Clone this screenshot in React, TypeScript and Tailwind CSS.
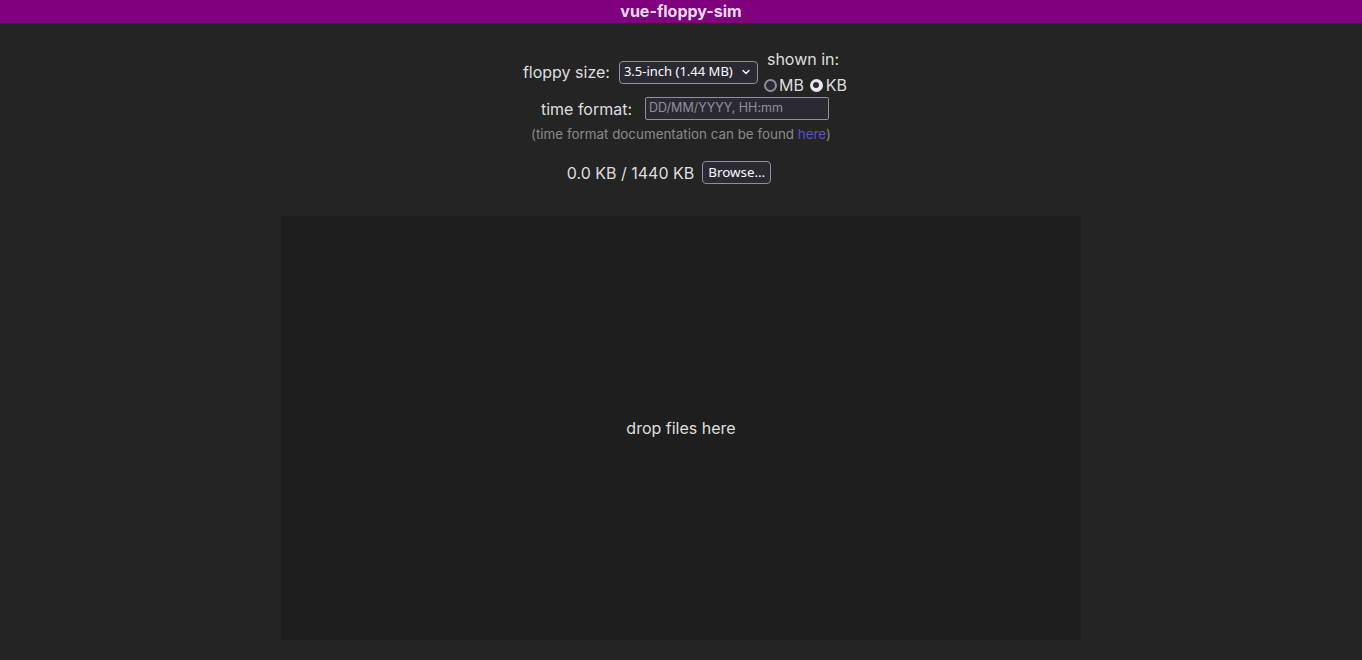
import React from "react";

function Radio({ checked }: { checked?: boolean }) {
  return checked ? (
    <span className="flex w-[13px] h-[13px] rounded-full bg-[#e8e8ee] items-center justify-center shrink-0">
      <span className="block w-[6px] h-[6px] rounded-full bg-[#2b2a33]" />
    </span>
  ) : (
    <span className="block w-[13px] h-[13px] rounded-full border-2 border-[#8f8f9d] bg-[#2b2a33] shrink-0" />
  );
}

export default function App() {
  return (
    <div
      className="min-h-[660px] bg-[#242424] text-white/87 flex flex-col"
      style={{ fontFamily: "Inter, 'Noto Sans', sans-serif" }}
    >
      <header className="h-[23px] bg-[#800080] flex items-center justify-center font-bold text-[16px] leading-[23px]">
        vue-floppy-sim
      </header>

      <div className="flex flex-col items-center mt-[25px]">
        {/* Row 1 */}
        <div className="flex items-center h-[48px] pl-[8px]">
          <span className="text-[16px] leading-[24px] text-[#dedede]">floppy size:</span>
          <div className="ml-[9px] w-[139px] h-[23px] rounded-[4px] border border-[#8f8f9d] bg-[#2b2a33] flex items-center justify-between pl-[4px] pr-[5px] text-[13px] text-[#fbfbfe]">
            <span style={{ fontFamily: "'Noto Sans', Inter, sans-serif" }}>3.5-inch (1.44 MB)</span>
            <svg width="10" height="10" viewBox="0 0 10 10" className="mr-[1px]">
              <path d="M2 3.5 L5 6.5 L8 3.5" fill="none" stroke="#fbfbfe" strokeWidth="1.4" strokeLinecap="round" strokeLinejoin="round" />
            </svg>
          </div>
          <div className="ml-[5px] flex flex-col text-[16px] leading-[24px] text-[#dedede]">
            <span className="pl-[4px]">shown in:</span>
            <div className="flex items-center pt-[2px]">
              <span className="ml-[1px] flex"><Radio /></span>
              <span className="ml-[2px]">MB</span>
              <span className="ml-[6px] flex"><Radio checked /></span>
              <span className="ml-[3px]">KB</span>
            </div>
          </div>
        </div>

        {/* Row 2 */}
        <div className="flex items-center h-[25px] pl-[8px]">
          <span className="text-[16px] leading-[24px] text-[#dedede]">time format:</span>
          <div className="ml-[13px] w-[184px] h-[23px] rounded-[2px] border border-[#8f8f9d] bg-[#2b2a33] flex items-center pl-[3px] text-[12.5px] text-[#8f8f9d]">
            DD/MM/YYYY, HH:mm
          </div>
        </div>

        {/* Row 3 */}
        <div className="h-[24px] pt-[2px] flex items-center text-[13.4px] text-[#8a8a8a]">
          <span>
            (time format documentation can be found <span className="text-[#5454c4]">here</span>)
          </span>
        </div>

        {/* Row 4 */}
        <div className="mt-[16px] flex items-center h-[23px] pr-[24px]">
          <span className="text-[16px] leading-[24px] text-[#dedede]">0.0 KB / 1440 KB</span>
          <div
            className="ml-[8px] w-[69px] h-[23px] rounded-[4px] border border-[#8f8f9d] bg-[#2b2a33] flex items-center justify-center text-[13.4px] text-[#fbfbfe]"
            style={{ fontFamily: "'Noto Sans', Inter, sans-serif" }}
          >
            Browse…
          </div>
        </div>

        {/* Drop zone */}
        <div className="mt-[32px] mb-[20px] w-[800px] h-[424px] bg-[#1e1e1e] flex items-center justify-center text-[16px] text-[#dedede]">
          drop files here
        </div>
      </div>
    </div>
  );
}
